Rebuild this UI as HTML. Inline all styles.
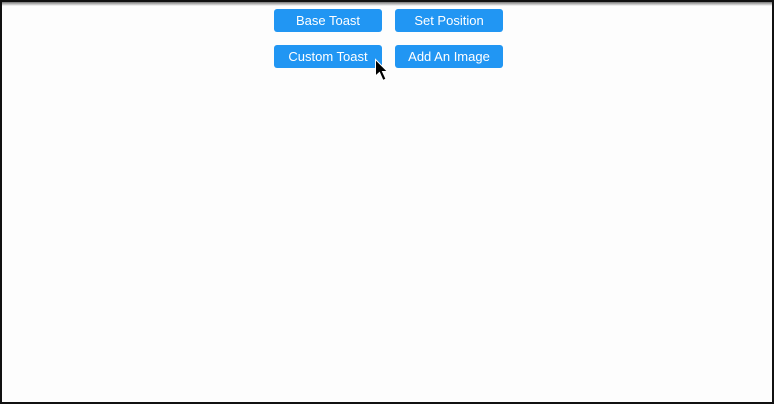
<!DOCTYPE html>
<html><head><meta charset="utf-8"><style>
html,body{margin:0;padding:0;}
body{width:774px;height:404px;position:relative;overflow:hidden;background:#fdfdfd;font-family:"Liberation Sans",sans-serif;}
.frame{position:absolute;left:0;top:0;width:770px;height:400px;border:2px solid #111;}
.topfade{position:absolute;left:2px;top:2px;width:770px;height:4px;background:linear-gradient(#777,#fdfdfd);}
.btn{position:absolute;width:108px;height:23px;background:#2196f3;color:#fff;border-radius:3px;font-size:13px;line-height:23px;text-align:center;}
</style></head><body>
<div class="frame"></div>
<div class="topfade"></div>
<div class="btn" style="left:274px;top:9px">Base Toast</div>
<div class="btn" style="left:395px;top:9px">Set Position</div>
<div class="btn" style="left:274px;top:45px">Custom Toast</div>
<div class="btn" style="left:395px;top:45px">Add An Image</div>
<svg style="position:absolute;left:374px;top:58px" width="16" height="25" viewBox="0 0 16 25">
<path d="M1.5 1.5 L1.5 18 L5.5 14.5 L9 22.5 L12 21 L8.5 13.5 L13.5 13.5 Z" fill="#000" stroke="#fff" stroke-width="1"/>
</svg>
</body></html>
